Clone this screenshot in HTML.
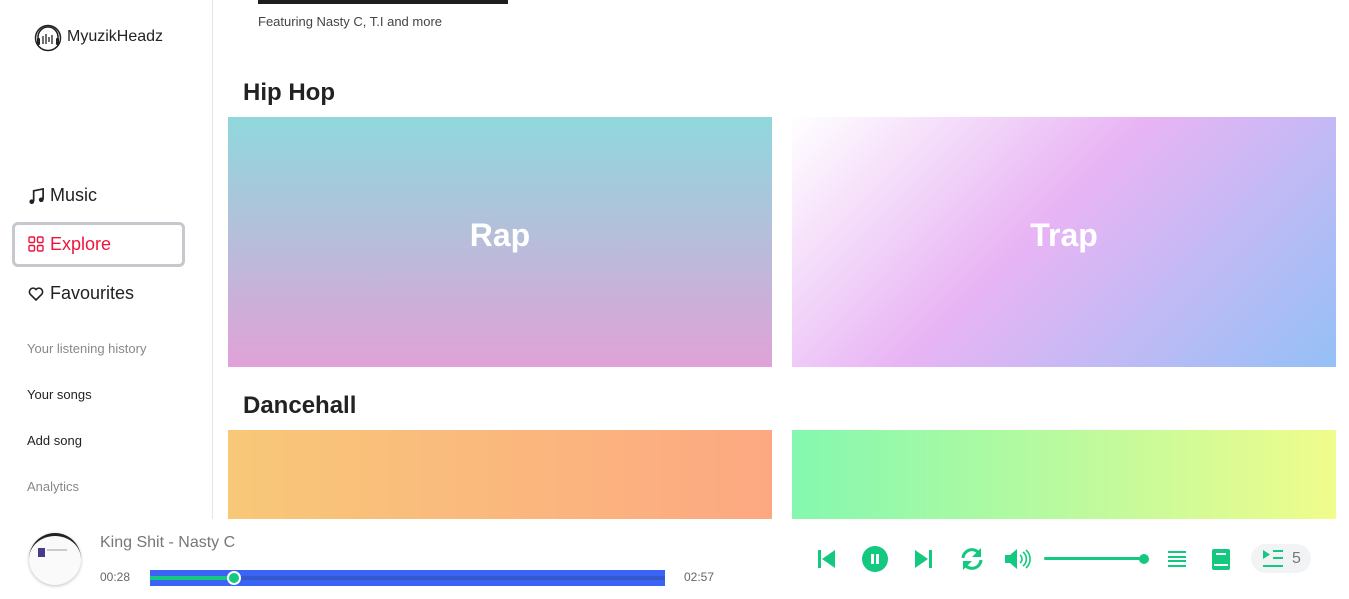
<!DOCTYPE html>
<html><head><meta charset="utf-8"><style>
*{margin:0;padding:0;box-sizing:border-box}
body{width:1349px;height:599px;overflow:hidden;background:#fff;font-family:"Liberation Sans",sans-serif;position:relative}
.side{position:absolute;left:0;top:0;width:213px;height:519px;border-right:1px solid #e5e5e5}
.abs{position:absolute}
.card{position:absolute;display:flex;align-items:center;justify-content:center;color:#fff;font-weight:bold;font-size:32px;padding-bottom:14px}
h2{position:absolute;font-size:24px;font-weight:bold;color:#222}
.g{fill:#12c97f}
</style></head><body>
<div class="side">
  <svg class="abs" style="left:34px;top:24px" width="28" height="28" viewBox="0 0 28 28"><circle cx="14" cy="14" r="12.5" fill="none" stroke="#222" stroke-width="1.5"/><path d="M4 17v-4a10 10 0 0 1 20 0v4" fill="none" stroke="#222" stroke-width="1.5"/><rect x="3" y="14" width="3" height="7" rx="1" fill="#222"/><rect x="22" y="14" width="3" height="7" rx="1" fill="#222"/><path d="M9 12v8M12 10v10M15 13v5M18 11v9" stroke="#222" stroke-width="1.3"/></svg>
  <div class="abs" style="left:67px;top:28px;font-size:16px;color:#222">MyuzikHeadz</div>
  <svg class="abs" style="left:28px;top:188px" width="17" height="17" viewBox="0 0 18 18"><path d="M6 14V3l10-2v11" fill="none" stroke="#222" stroke-width="1.8"/><circle cx="4" cy="14.5" r="2.5" fill="#222"/><circle cx="14" cy="12.5" r="2.5" fill="#222"/></svg>
  <div class="abs" style="left:50px;top:185px;font-size:18px;color:#222">Music</div>
  <div class="abs" style="left:12px;top:222px;width:173px;height:45px;border:3px solid #c5c8cc;border-radius:6px"></div>
  <svg class="abs" style="left:28px;top:236px" width="16" height="16" viewBox="0 0 16 16" fill="none" stroke="#f0143c" stroke-width="1.4"><rect x="1" y="1" width="5.5" height="5.5" rx="1.2"/><rect x="9.5" y="1" width="5.5" height="5.5" rx="1.2"/><rect x="1" y="9.5" width="5.5" height="5.5" rx="1.2"/><rect x="9.5" y="9.5" width="5.5" height="5.5" rx="1.2"/></svg>
  <div class="abs" style="left:50px;top:234px;font-size:18px;color:#f0143c">Explore</div>
  <svg class="abs" style="left:28px;top:286px" width="16" height="16" viewBox="0 0 16 16"><path d="M8 14L2.2 8.2A3.4 3.4 0 0 1 8 3.5a3.4 3.4 0 0 1 5.8 4.7z" fill="none" stroke="#222" stroke-width="1.6"/></svg>
  <div class="abs" style="left:50px;top:283px;font-size:18px;color:#222">Favourites</div>
  <div class="abs" style="left:27px;top:341px;font-size:13px;color:#888">Your listening history</div>
  <div class="abs" style="left:27px;top:387px;font-size:13px;color:#222">Your songs</div>
  <div class="abs" style="left:27px;top:433px;font-size:13px;color:#222">Add song</div>
  <div class="abs" style="left:27px;top:479px;font-size:13px;color:#888">Analytics</div>
</div>
<div class="abs" style="left:258px;top:0;width:250px;height:4px;background:#1e1e1e"></div>
<div class="abs" style="left:258px;top:14px;font-size:13px;color:#444">Featuring Nasty C, T.I and more</div>
<h2 style="left:243px;top:79px">Hip Hop</h2>
<div class="card" style="left:228px;top:117px;width:544px;height:250px;background:linear-gradient(180deg,#8fd8dc,#e0a2d8)">Rap</div>
<div class="card" style="left:792px;top:117px;width:544px;height:250px;background:linear-gradient(135deg,#fff 0%,#e8b4f4 45%,#94c0f6 100%)">Trap</div>
<h2 style="left:243px;top:392px">Dancehall</h2>
<div class="card" style="left:228px;top:430px;width:544px;height:89px;background:linear-gradient(90deg,#f8c878,#fda882)"></div>
<div class="card" style="left:792px;top:430px;width:544px;height:89px;background:linear-gradient(90deg,#84f8b0,#f0fc8c)"></div>
<div class="abs" style="left:0;top:519px;width:1349px;height:80px;background:#fff"></div>
<div class="abs" style="left:29px;top:533px;width:52px;height:52px;border-radius:50%;background:#fafafa;box-shadow:0 1px 3px rgba(0,0,0,.25);border-top:3px solid #222;overflow:hidden"><div style="position:absolute;left:9px;top:12px;width:7px;height:9px;background:#4a3a8a"></div><div style="position:absolute;left:18px;top:13px;width:20px;height:2px;background:#ccc"></div></div>
<div class="abs" style="left:100px;top:534px;font-size:16px;color:#777">King Shit - Nasty C</div>
<div class="abs" style="left:100px;top:570px;font-size:12px;color:#666">00:28</div>
<div class="abs" style="left:150px;top:570px;width:515px;height:16px;background:#3c64f4"></div>
<div class="abs" style="left:150px;top:576px;width:515px;height:4px;background:#3458d0"></div>
<div class="abs" style="left:150px;top:576px;width:84px;height:4px;background:#12c97f"></div>
<div class="abs" style="left:227px;top:571px;width:14px;height:14px;border-radius:50%;background:#12c97f;border:2px solid #fff"></div>
<div class="abs" style="left:684px;top:570px;font-size:12px;color:#666">02:57</div>
<svg class="abs" style="left:816px;top:547px" width="22" height="24" viewBox="0 0 22 24"><rect class="g" x="2" y="3" width="3" height="18"/><path class="g" d="M19 3v18L6 12z"/></svg>
<svg class="abs" style="left:861px;top:545px" width="28" height="28" viewBox="0 0 28 28"><circle class="g" cx="14" cy="14" r="13"/><rect x="10" y="9" width="3" height="10" fill="#fff"/><rect x="15" y="9" width="3" height="10" fill="#fff"/></svg>
<svg class="abs" style="left:912px;top:547px" width="22" height="24" viewBox="0 0 22 24"><path class="g" d="M3 3v18l13-9z"/><rect class="g" x="17" y="3" width="3" height="18"/></svg>
<svg class="abs" style="left:960px;top:546px" width="24" height="26" viewBox="0 0 24 26" fill="none" stroke="#12c97f" stroke-width="3"><path d="M3 12a9 9 0 0 1 16-5"/><path d="M21 14a9 9 0 0 1-16 5"/><path class="g" stroke="none" d="M21 2v9h-9zM3 24v-9h9z"/></svg>
<svg class="abs" style="left:1003px;top:546px" width="28" height="26" viewBox="0 0 28 26"><path class="g" d="M2 9h5l7-6v20l-7-6H2z"/><g fill="none" stroke="#12c97f" stroke-width="1.6"><path d="M17 9a5 5 0 0 1 0 8"/><path d="M20 6a9 9 0 0 1 0 14"/><path d="M23 4a12 12 0 0 1 0 18"/></g></svg>
<div class="abs" style="left:1044px;top:557px;width:96px;height:3px;background:#12c97f;border-radius:2px"></div>
<div class="abs" style="left:1139px;top:554px;width:10px;height:10px;border-radius:50%;background:#12c97f"></div>
<svg class="abs" style="left:1167px;top:549px" width="20" height="20" viewBox="0 0 20 20"><g class="g"><rect x="1" y="2" width="18" height="2"/><rect x="1" y="7" width="18" height="2"/><rect x="1" y="11" width="18" height="2"/><rect x="1" y="16" width="18" height="2"/></g></svg>
<svg class="abs" style="left:1211px;top:548px" width="20" height="23" viewBox="0 0 20 23"><rect class="g" x="1" y="1" width="18" height="21" rx="2"/><rect x="5" y="5" width="10" height="2" fill="#fff"/><rect x="3" y="16" width="14" height="2" fill="#fff"/></svg>
<div class="abs" style="left:1251px;top:544px;width:60px;height:29px;border-radius:15px;background:#f2f3f5"></div>
<svg class="abs" style="left:1262px;top:549px" width="22" height="20" viewBox="0 0 22 20"><path class="g" d="M1 1v9l7-4.5z"/><g class="g"><rect x="11" y="1" width="10" height="2"/><rect x="11" y="8" width="10" height="2"/><rect x="1" y="16" width="20" height="2"/></g></svg>
<div class="abs" style="left:1292px;top:550px;font-size:16px;color:#777">5</div>
</body></html>
